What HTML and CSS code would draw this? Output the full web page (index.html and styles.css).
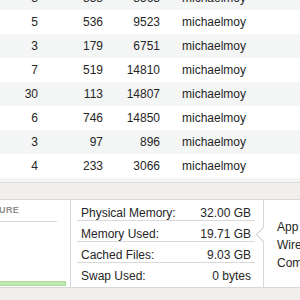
FILE: index.html
```html
<!DOCTYPE html>
<html>
<head>
<meta charset="utf-8">
<link rel="stylesheet" href="styles.css">
</head>
<body>
<div class="table">
  <div class="row"><span class="n">8</span><span class="n">358</span><span class="n">8563</span><span class="u">michaelmoy</span></div>
  <div class="row"><span class="n">5</span><span class="n">536</span><span class="n">9523</span><span class="u">michaelmoy</span></div>
  <div class="row"><span class="n">3</span><span class="n">179</span><span class="n">6751</span><span class="u">michaelmoy</span></div>
  <div class="row"><span class="n">7</span><span class="n">519</span><span class="n">14810</span><span class="u">michaelmoy</span></div>
  <div class="row"><span class="n">30</span><span class="n">113</span><span class="n">14807</span><span class="u">michaelmoy</span></div>
  <div class="row"><span class="n">6</span><span class="n">746</span><span class="n">14850</span><span class="u">michaelmoy</span></div>
  <div class="row"><span class="n">3</span><span class="n">97</span><span class="n">896</span><span class="u">michaelmoy</span></div>
  <div class="row"><span class="n">4</span><span class="n">233</span><span class="n">3066</span><span class="u">michaelmoy</span></div>
  <div class="row"><span class="n">2</span><span class="n">412</span><span class="n">5120</span><span class="u">michaelmoy</span></div>
</div>
<div class="panel">
  <div class="pressure">
    <div class="ph">MEMORY PRESSURE</div>
    <div class="bar"></div>
  </div>
  <div class="stats">
    <div class="stat"><span>Physical Memory:</span><span>32.00 GB</span></div>
    <div class="stat"><span>Memory Used:</span><span>19.71 GB</span></div>
    <div class="stat"><span>Cached Files:</span><span>9.03 GB</span></div>
    <div class="stat last"><span>Swap Used:</span><span>0 bytes</span></div>
  </div>
  <div class="detail">
    <div class="dl">App Memory:</div>
    <div class="dl">Wired Memory:</div>
    <div class="dl">Compressed:</div>
  </div>
</div>
</body>
</html>
```
FILE: styles.css
```css
html, body {
  margin: 0;
  padding: 0;
}
body {
  width: 300px;
  height: 300px;
  overflow: hidden;
  background: #f2eeec;
  font-family: "Liberation Sans", Arial, sans-serif;
  font-size: 12px;
  color: #262626;
}
.table {
  margin-top: -14px;
  height: 196px;
  overflow: hidden;
  background: #fff;
  border-bottom: 1px solid #dcdcdc;
}
.row {
  display: grid;
  grid-template-columns: 38px 65px 57px 1fr;
  height: 24px;
  line-height: 24px;
  white-space: nowrap;
}
.row:nth-child(odd) {
  background: #f4f5f5;
}
.n {
  text-align: right;
}
.u {
  padding-left: 22px;
}
.panel {
  margin-top: 16px;
  height: 87px;
  display: flex;
  background: #fff;
  border-top: 1px solid #d8d8d8;
  border-bottom: 1px solid #d8d8d8;
}
.pressure {
  flex: none;
  width: 170px;
  margin-left: -100px;
  border-right: 1px solid #d8d8d8;
  display: flex;
  flex-direction: column;
}
.ph {
  height: 21px;
  line-height: 21px;
  margin-right: 13px;
  padding-right: 38px;
  text-align: right;
  border-bottom: 1px solid #d9d9d9;
  font-size: 9px;
  font-weight: bold;
  letter-spacing: 0.3px;
  color: #8e8e8e;
  white-space: nowrap;
}
.bar {
  margin-top: auto;
  margin-right: 4px;
  margin-bottom: 1px;
  height: 3px;
  background: #bfe9b0;
  border: 1px solid #a9dd98;
  border-left: none;
}
.stats {
  flex: none;
  width: 178px;
  margin: 0 8px 0 6px;
}
.stat {
  display: flex;
  justify-content: space-between;
  height: 14px;
  line-height: 14px;
  padding: 6px 4px 0 4px;
  border-bottom: 1px solid #d9d9d9;
  white-space: nowrap;
}
.stat.last {
  border-bottom: none;
  height: 18px;
  padding-top: 6px;
}
.detail {
  flex: 1;
  position: relative;
  border-left: 1px solid #d8d8d8;
  padding: 18px 0 0 13px;
  white-space: nowrap;
}
.detail::before {
  content: "";
  position: absolute;
  left: -6px;
  top: 29px;
  width: 10px;
  height: 10px;
  background: #fff;
  border-left: 1px solid #cfcfcf;
  border-bottom: 1px solid #cfcfcf;
  transform: rotate(45deg);
}
.dl {
  height: 18px;
  line-height: 18px;
}
```
